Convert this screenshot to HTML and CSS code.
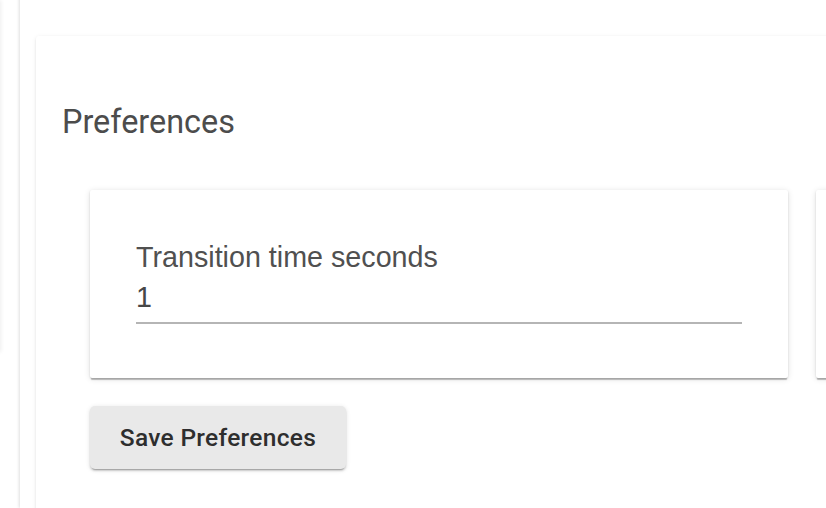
FILE: index.html
```html
<!DOCTYPE html>
<html lang="en">
<head>
  <meta charset="UTF-8">
  <title>Preferences</title>
  <link rel="stylesheet" href="styles.css">
</head>
<body>
  <div class="layout">
    <div class="side">
      <div class="side-panel"></div>
    </div>

    <div class="main">
      <div class="card">
        <h2 class="card-title">Preferences</h2>

        <div class="settings">
          <div class="setting-row">
            <div class="setting-card">
              <label class="field-label" for="transition">Transition time seconds</label>
              <input class="field-input" type="text" id="transition" value="1">
            </div>
            <div class="setting-card"></div>
          </div>

          <button class="save-btn">Save Preferences</button>
        </div>
      </div>
    </div>
  </div>
</body>
</html>
```

FILE: styles.css
```css
body {
  margin: 0;
  background: #fff;
  font-family: Roboto, 'Liberation Sans', sans-serif;
  overflow: hidden;
}

.layout {
  display: flex;
  height: 508px;
}

.side {
  width: 20px;
  flex-shrink: 0;
}

.side-panel {
  width: 6px;
  height: 352px;
  margin-left: -6px;
  box-shadow: 1px 0 4px rgba(0, 0, 0, 0.07);
}

.main {
  flex: 1;
  min-width: 0;
  margin-top: -20px;
  padding: 56px 0 0 16px;
  background: white;
  box-shadow: -1px 0 3px rgba(0, 0, 0, 0.13);
  overflow: hidden;
}

.card {
  width: 1200px;
  height: 600px;
  background: white;
  border-radius: 3px;
  padding: 67px 0 0 26px;
  box-shadow: 0 2px 2px -1px rgba(0, 0, 0, 0.12),
              0 1px 2px rgba(0, 0, 0, 0.08),
              0 1px 5px rgba(0, 0, 0, 0.07);
}

.card-title {
  margin: 0;
  font-size: 32.4px;
  line-height: 38px;
  font-weight: 400;
  color: #4c4c4c;
}

.settings {
  padding: 49px 0 0 28px;
}

.setting-row {
  display: flex;
  gap: 28px;
}

.setting-card {
  flex: 0 0 698px;
  box-sizing: border-box;
  height: 188px;
  padding: 50px 46px 0;
  background: white;
  border-radius: 2px;
  box-shadow: 0 3px 1px -1px rgba(0, 0, 0, 0.22),
              0 1px 2px rgba(0, 0, 0, 0.14),
              0 1px 6px rgba(0, 0, 0, 0.12);
}

.field-label {
  display: block;
  font-family: 'Liberation Sans', Arial, sans-serif;
  font-size: 28.7px;
  line-height: 34px;
  color: #505050;
}

.field-input {
  display: block;
  width: 100%;
  box-sizing: border-box;
  margin-top: 6px;
  padding: 0 0 8px;
  border: none;
  border-bottom: 2px solid #b5b5b5;
  font-family: 'Liberation Sans', Arial, sans-serif;
  font-size: 28.7px;
  line-height: 34px;
  color: #474747;
  background: transparent;
  outline: none;
}

.save-btn {
  display: flex;
  align-items: center;
  justify-content: center;
  margin-top: 28px;
  width: 256px;
  height: 63px;
  padding: 0;
  border: none;
  border-radius: 5px;
  background: #e9e9e9;
  color: #2e2e2e;
  font-family: Roboto, sans-serif;
  font-size: 24.5px;
  font-weight: 500;
  letter-spacing: 0.3px;
  cursor: pointer;
  box-shadow: 0 3px 1px -2px rgba(0, 0, 0, 0.2),
              0 2px 2px rgba(0, 0, 0, 0.14),
              0 1px 5px rgba(0, 0, 0, 0.12);
}

.save-btn:hover {
  background-color: #dcdcdc;
}
```
